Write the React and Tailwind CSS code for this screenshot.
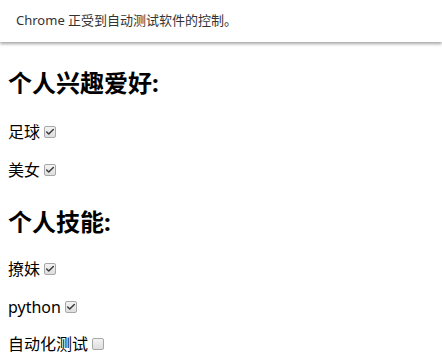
import { Check } from "lucide-react";

function Box({ checked }) {
  return (
    <span className="ml-1 inline-flex h-[12px] w-[12px] items-center justify-center rounded-[2px] border border-[#a7a7a7] bg-gradient-to-b from-[#f3f3f3] to-[#dedede]">
      {checked && <Check size={10} strokeWidth={3.5} className="text-[#3a3a3a]" />}
    </span>
  );
}

function Row({ label, checked, className = "" }) {
  return (
    <div className={`flex h-[22px] items-center text-[16px] text-black ${className}`}>
      <span>{label}</span>
      <Box checked={checked} />
    </div>
  );
}

export default function App() {
  return (
    <div className="min-h-screen bg-white font-['Microsoft_YaHei','Noto_Sans','Noto_Sans_CJK_SC',sans-serif]">
      <div className="flex h-[42px] items-center bg-white px-4 text-[13px] text-[#333] shadow-[0_2px_3px_rgba(0,0,0,0.35)]">
        Chrome 正受到自动测试软件的控制。
      </div>

      <div className="px-2">
        <h2 className="mt-[25px] flex h-[32px] items-center text-[24px] font-bold">个人兴趣爱好:</h2>
        <Row label="足球" checked className="mt-[22px]" />
        <Row label="美女" checked className="mt-[16px]" />

        <h2 className="mt-[25px] flex h-[32px] items-center text-[24px] font-bold">个人技能:</h2>
        <Row label="撩妹" checked className="mt-[20px]" />
        <Row label="python" checked className="mt-[16px]" />
        <Row label="自动化测试" className="mt-[15px]" />
      </div>
    </div>
  );
}
